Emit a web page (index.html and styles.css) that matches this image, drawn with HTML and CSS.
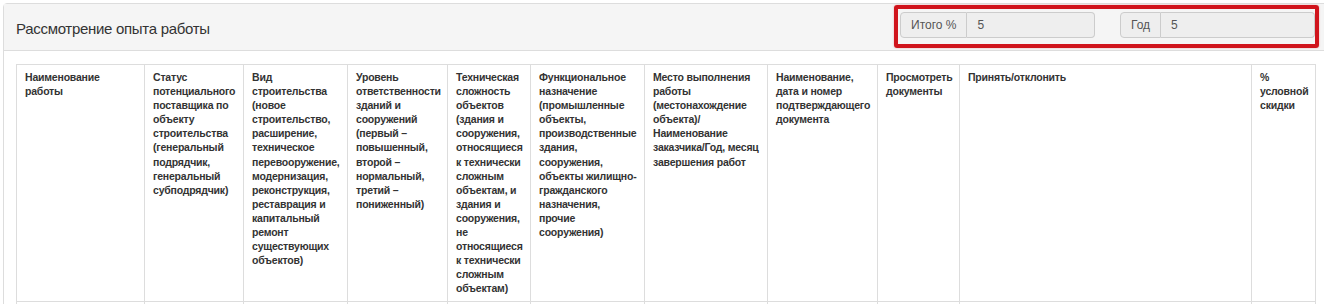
FILE: index.html
```html
<!DOCTYPE html>
<html lang="ru">
<head>
<meta charset="utf-8">
<title>Рассмотрение опыта работы</title>
<link rel="stylesheet" href="styles.css">
</head>
<body>
<div class="panel">
  <div class="panel-heading">
    <h3 class="panel-title">Рассмотрение опыта работы</h3>
    <div class="totals">
      <div class="input-group">
        <span class="addon">Итого %</span>
        <span class="field">5</span>
      </div>
      <div class="input-group">
        <span class="addon">Год</span>
        <span class="field">5</span>
      </div>
    </div>
  </div>
  <div class="panel-body">
    <table class="grid">
      <colgroup>
        <col class="c1"><col class="c2"><col class="c3"><col class="c4"><col class="c5"><col class="c6"><col class="c7"><col class="c8"><col class="c9"><col class="c10"><col class="c11">
      </colgroup>
      <thead>
        <tr>
          <th>Наименование<br>работы</th>
          <th>Статус<br>потенциального<br>поставщика по<br>объекту<br>строительства<br>(генеральный<br>подрядчик,<br>генеральный<br>субподрядчик)</th>
          <th>Вид<br>строительства<br>(новое<br>строительство,<br>расширение,<br>техническое<br>перевооружение,<br>модернизация,<br>реконструкция,<br>реставрация и<br>капитальный<br>ремонт<br>существующих<br>объектов)</th>
          <th>Уровень<br>ответственности<br>зданий и<br>сооружений<br>(первый –<br>повышенный,<br>второй –<br>нормальный,<br>третий –<br>пониженный)</th>
          <th>Техническая<br>сложность<br>объектов<br>(здания и<br>сооружения,<br>относящиеся<br>к технически<br>сложным<br>объектам, и<br>здания и<br>сооружения,<br>не<br>относящиеся<br>к технически<br>сложным<br>объектам)</th>
          <th>Функциональное<br>назначение<br>(промышленные<br>объекты,<br>производственные<br>здания,<br>сооружения,<br>объекты жилищно-<br>гражданского<br>назначения,<br>прочие<br>сооружения)</th>
          <th>Место выполнения<br>работы<br>(местонахождение<br>объекта)/<br>Наименование<br>заказчика/Год, месяц<br>завершения работ</th>
          <th>Наименование,<br>дата и номер<br>подтверждающего<br>документа</th>
          <th>Просмотреть<br>документы</th>
          <th>Принять/отклонить</th>
          <th>%<br>условной<br>скидки</th>
        </tr>
      </thead>
      <tbody>
        <tr>
          <td></td><td></td><td></td><td></td><td></td><td></td><td></td><td></td><td></td><td></td><td></td>
        </tr>
      </tbody>
    </table>
  </div>
</div>
</body>
</html>
```
FILE: styles.css
```css
html, body {
  margin: 0;
  padding: 0;
  background: #fff;
  overflow: hidden;
}
body {
  font-family: "Liberation Sans", Arial, sans-serif;
  color: #333;
  padding: 3px 0 0 3px;
}
.panel {
  box-sizing: border-box;
  width: 1325px;
  border: 1px solid #ddd;
  border-radius: 4px 4px 0 0;
  background: #fff;
}
.panel-heading {
  height: 46px;
  background: #f5f5f5;
  border-bottom: 1px solid #ddd;
  padding: 0 12px;
  display: flex;
  align-items: center;
  justify-content: space-between;
}
.panel-title {
  margin: 0;
  font-size: 15px;
  letter-spacing: -0.3px;
  font-weight: normal;
  color: #333;
  position: relative;
  top: 1px;
}
.totals {
  position: relative;
  display: flex;
  gap: 25px;
  margin-bottom: 4px;
}
.totals::after {
  content: "";
  position: absolute;
  left: -6px;
  top: -7px;
  right: -4px;
  bottom: -10px;
  border: 4px solid #d0141c;
  border-radius: 3px;
  box-shadow: 0 0 2px rgba(208, 20, 28, 0.35);
}
.input-group {
  display: flex;
  width: 195px;
  height: 26px;
  font-size: 12px;
}
.addon {
  display: flex;
  align-items: center;
  padding: 0 10px;
  background: #eee;
  color: #555;
  border: 1px solid #ccc;
  border-radius: 4px 0 0 4px;
}
.field {
  flex: 1;
  display: flex;
  align-items: center;
  padding: 0 10px;
  background: #eee;
  color: #555;
  border: 1px solid #ccc;
  border-left: 0;
  border-radius: 0 4px 4px 0;
}
.panel-body {
  padding: 13px 12px 0 12px;
}
.grid {
  width: 1299px;
  table-layout: fixed;
  border-collapse: collapse;
}
.c1 { width: 128px; }
.c2 { width: 99px; }
.c3 { width: 104px; }
.c4 { width: 100px; }
.c5 { width: 83px; }
.c6 { width: 114px; }
.c7 { width: 123px; }
.c8 { width: 110px; }
.c9 { width: 82px; }
.c10 { width: 292px; }
.c11 { width: 64px; }
.grid th {
  border: 1px solid #ddd;
  padding: 5px 4px 5px 8px;
  text-align: left;
  vertical-align: top;
  font-size: 10.5px;
  letter-spacing: -0.2px;
  line-height: 14.1px;
  font-weight: bold;
  color: #333;
  white-space: nowrap;
  overflow: hidden;
}
.grid td {
  border: 1px solid #ddd;
  height: 60px;
}
```
